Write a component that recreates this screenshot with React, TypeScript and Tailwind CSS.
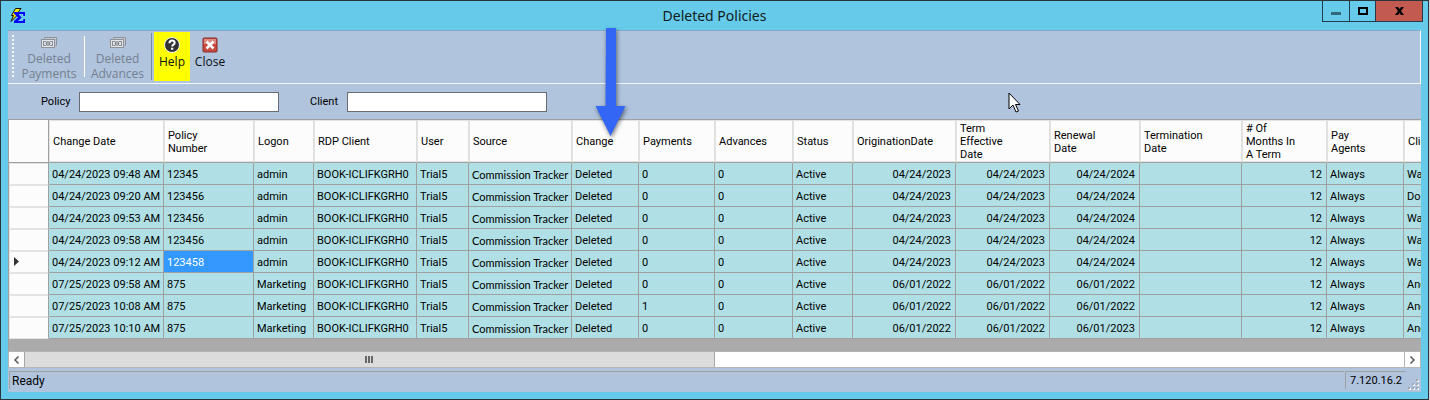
import React from "react";

interface Column {
  title: string;
  width: number;
  right?: boolean;
  font?: string;
}

interface PolicyRow {
  current?: boolean;
  cells: string[];
}

const columns: Column[] = [
  { title: "Change Date", width: 115 },
  { title: "Policy\nNumber", width: 90 },
  { title: "Logon", width: 60 },
  { title: "RDP Client", width: 103 },
  { title: "User", width: 52 },
  // narrower face so the source name fits its column
  { title: "Source", width: 103, font: "font-[Lato,sans-serif]" },
  { title: "Change", width: 67 },
  { title: "Payments", width: 76 },
  { title: "Advances", width: 78 },
  { title: "Status", width: 60 },
  { title: "OriginationDate", width: 103, right: true },
  { title: "Term\nEffective\nDate", width: 94, right: true },
  { title: "Renewal\nDate", width: 90, right: true },
  { title: "Termination\nDate", width: 102 },
  { title: "# Of\nMonths In\nA Term", width: 85, right: true },
  { title: "Pay\nAgents", width: 77 },
  { title: "Clie", width: 100 },
];

const makeRow = (
  changed: string,
  policy: string,
  logon: string,
  payments: string,
  start: string,
  renewal: string,
  client: string,
  current = false
): PolicyRow => ({
  current,
  cells: [
    changed, policy, logon, "BOOK-ICLIFKGRH0", "Trial5", "Commission Tracker", "Deleted",
    payments, "0", "Active", start, start, renewal, "", "12", "Always", client,
  ],
});

const rows: PolicyRow[] = [
  makeRow("04/24/2023 09:48 AM", "12345", "admin", "0", "04/24/2023", "04/24/2024", "Wa"),
  makeRow("04/24/2023 09:20 AM", "123456", "admin", "0", "04/24/2023", "04/24/2024", "Do"),
  makeRow("04/24/2023 09:53 AM", "123456", "admin", "0", "04/24/2023", "04/24/2024", "Wa"),
  makeRow("04/24/2023 09:58 AM", "123456", "admin", "0", "04/24/2023", "04/24/2024", "Wa"),
  makeRow("04/24/2023 09:12 AM", "123458", "admin", "0", "04/24/2023", "04/24/2024", "Wa", true),
  makeRow("07/25/2023 09:58 AM", "875", "Marketing", "0", "06/01/2022", "06/01/2022", "And"),
  makeRow("07/25/2023 10:08 AM", "875", "Marketing", "1", "06/01/2022", "06/01/2022", "And"),
  makeRow("07/25/2023 10:10 AM", "875", "Marketing", "0", "06/01/2022", "06/01/2023", "And"),
];

const AppIcon = () => (
  <svg className="w-4 h-4" viewBox="0 0 16 16" aria-hidden="true">
    <path d="M5.500 0.500H11L8 4.500h2L1 13.500 3.500 7.500H1.500z" fill="#ffe800" stroke="#111" />
    <path d="M4 4h11v4h-1.500L13 6H8.500L11.500 9.500 8 13h5l.5-2H15v4H4v-2l4-3.500L4 5.500z" fill="#0000ff" />
  </svg>
);

const MoneyIcon = () => (
  <svg className="w-4 h-3" viewBox="0 0 16 12" aria-hidden="true">
    <path d="M3 0h13v9h-2V2H3z" fill="#c4c8ce" />
    <path d="M3.500 1.500v-1h12v8h-1" fill="none" stroke="#8d9299" />
    <rect x="0.500" y="2.500" width="13" height="8" fill="#e1e4e8" stroke="#8d9299" />
    <path d="M2 4h3v1H3v3h2v1H2zM12 4H9v1h2v3H9v1h3z" fill="#8a8f97" />
    <circle cx="7" cy="6.500" r="2.200" fill="#747981" />
    <path d="M7 5v3" stroke="#e1e4e8" />
  </svg>
);

const HelpIcon = () => (
  <svg className="w-4 h-4" viewBox="0 0 16 16" aria-hidden="true">
    <circle cx="8" cy="8" r="7.500" fill="#303236" stroke="#f4f4f4" />
    <path d="M5.500 6.200c0-3.600 5.200-3.300 5.200-.4C10.700 7.700 8.200 7.600 8.200 9.600" fill="none" stroke="#fff" strokeWidth="2" />
    <rect x="7" y="10.700" width="2.300" height="2" fill="#fff" />
  </svg>
);

const CloseIcon = () => (
  <svg className="w-4 h-4" viewBox="0 0 16 16" aria-hidden="true">
    <rect x="1" y="1" width="14" height="14" rx="1" fill="#c9493c" stroke="#842c2c" />
    <path d="M2 2h12v5H2z" fill="#dd8b80" />
    <path d="M4.500 4.500l7 7M11.500 4.500l-7 7" stroke="#fff" strokeWidth="2.500" />
  </svg>
);

const TitleBar = () => (
  <header className="relative flex h-[29px] shrink-0 items-start">
    <div className="flex h-full flex-1 items-center pl-[9px]">
      <AppIcon />
    </div>
    <h1 className="pointer-events-none absolute inset-x-0 top-0 text-center font-['Noto_Sans',sans-serif] text-[14px] leading-[29px] text-[#101c22]">
      Deleted Policies
    </h1>
    <div className="relative mr-[5px] flex h-[21px] divide-x divide-[#253a44] border border-t-0 border-[#253a44]">
      <button aria-label="Minimize" className="flex w-[27px] items-center justify-center pt-[4px]">
        <span className="h-[3px] w-[10px] bg-[#336a7e]" />
      </button>
      <button aria-label="Maximize" className="flex w-[26px] items-center justify-center">
        <span className="h-[8px] w-[10px] border-2 border-black" />
      </button>
      <button aria-label="Close window" className="flex w-[46px] items-center justify-center bg-[#c35a4f]">
        <svg className="h-2 w-[9px]" viewBox="0 0 9 8">
          <path d="M0 0h3l1.500 2L6 0h3L6 4l3 4H6L4.500 6 3 8H0l3-4z" fill="#000" />
        </svg>
      </button>
    </div>
  </header>
);

const Toolbar = () => (
  <div className="flex h-[54px] shrink-0 border-t border-b border-t-[#84a9c8] border-b-[#f3f6fa] border-r border-r-white pb-px font-['Open_Sans',sans-serif] text-[12px] leading-[15px] text-[#0b0f14]">
    <div className="my-1 ml-1 w-[2px] bg-[repeating-linear-gradient(to_bottom,#f4f7fb_0_2px,transparent_2px_4px)]" />
    <button disabled className="flex w-[70px] flex-col items-center pt-[6px] text-[#75808f]">
      <MoneyIcon />
      <span className="mt-[2px]">Deleted<br />Payments</span>
    </button>
    <div className="my-[5px] w-px bg-white" />
    <button disabled className="flex w-[65px] flex-col items-center pt-[6px] text-[#75808f]">
      <MoneyIcon />
      <span className="mt-[2px]">Deleted<br />Advances</span>
    </button>
    <div className="my-[2px] ml-px mr-[2px] w-px bg-[#7688a5]" />
    <button className="my-px flex w-[36px] flex-col items-center bg-[#ffff00] pt-[5px]">
      <HelpIcon />
      <span className="mt-px">Help</span>
    </button>
    <button className="flex w-[40px] flex-col items-center pt-[6px]">
      <CloseIcon />
      <span className="mt-px">Close</span>
    </button>
  </div>
);

const Filters = () => (
  <div className="flex h-[35px] shrink-0 items-center pl-[33px] pt-px text-[11px]">
    <label htmlFor="policy" className="w-[38px] pt-px">Policy</label>
    <input id="policy" type="text" className="h-5 w-[200px] border border-[#696d73] bg-white px-1" />
    <label htmlFor="client" className="ml-[31px] w-[37px] pt-px">Client</label>
    <input id="client" type="text" className="h-5 w-[200px] border border-[#696d73] bg-white px-1" />
  </div>
);

const PolicyGrid = () => (
  <div className="h-[232px] overflow-hidden border-l border-t border-[#a0a0a0] bg-[#ababab]">
    <table className="w-[1495px] table-fixed border-separate border-spacing-0 text-[11px] leading-[13px]">
      <colgroup>
        <col style={{ width: 40 }} />
        {columns.map((col, i) => (
          <col key={i} style={{ width: col.width }} />
        ))}
      </colgroup>
      <thead>
        <tr className="h-[43px]">
          <th aria-label="Row" className="border-b border-r border-[#a0a0a0] bg-[#fcfcfc] p-0" />
          {columns.map((col, i) => (
            <th
              key={i}
              className="whitespace-pre border-b border-r border-b-[#a0a0a0] border-r-[#dedede] bg-[#fcfcfc] p-0 pl-[4px] pt-px text-left align-middle font-normal shadow-[inset_1px_1px_0_#e3e3e3,inset_0_-1px_0_#e3e3e3]"
            >
              {col.title}
            </th>
          ))}
        </tr>
      </thead>
      <tbody>
        {rows.map((row, r) => (
          <tr key={r} className="h-[22px]">
            <th className="border-b border-r border-b-[#e3e3e3] border-r-[#a0a0a0] bg-[#fcfcfc] p-0 shadow-[inset_1px_1px_0_#e3e3e3]">
              {row.current && (
                <svg className="ml-[5px] h-[9px] w-[5px]" viewBox="0 0 5 9">
                  <path d="M0 0l5 4.500L0 9z" fill="#333" />
                </svg>
              )}
            </th>
            {row.cells.map((cell, c) => (
              <td
                key={c}
                className={`overflow-hidden whitespace-nowrap border-b border-r border-[#a0a0a0] p-0 pt-px ${
                  columns[c].right ? "pr-[4px] text-right" : "pl-[3px] text-left"
                } ${row.current && c === 1 ? "bg-[#3399ff] text-white" : "bg-[#b0e0e6]"} ${columns[c].font ?? ""}`}
              >
                {cell}
              </td>
            ))}
          </tr>
        ))}
      </tbody>
    </table>
  </div>
);

const ScrollBar = () => (
  <div className="flex h-[17px] shrink-0 border border-[#b5b5b5] bg-white">
    <button aria-label="Scroll left" className="flex w-4 items-center justify-center border-r border-[#a6a6a6]">
      <svg className="h-2 w-[5px]" viewBox="0 0 5 8">
        <path d="M4.500 0.500L1 4l3.500 3.500" fill="none" stroke="#555" strokeWidth="1.500" />
      </svg>
    </button>
    <div className="flex flex-1">
      <div className="flex w-[50%] items-center justify-center gap-px border-r border-[#a6a6a6] bg-[#dcdcdc]">
        <span className="h-[7px] w-[2px] bg-[#666]" />
        <span className="h-[7px] w-[2px] bg-[#666]" />
        <span className="h-[7px] w-[2px] bg-[#666]" />
      </div>
    </div>
    <button aria-label="Scroll right" className="flex w-4 items-center justify-center border-l border-[#b5b5b5]">
      <svg className="h-2 w-[5px]" viewBox="0 0 5 8">
        <path d="M0.500 0.500L4 4 0.500 7.500" fill="none" stroke="#555" strokeWidth="1.500" />
      </svg>
    </button>
  </div>
);

const StatusBar = () => (
  <footer className="flex h-[24px] shrink-0 pl-px pt-[3px] text-[12px] leading-[18px]">
    <div className="mb-[3px] flex-1 border-l border-t border-[#a0a0a0] pl-[2px]">Ready</div>
    <div className="mb-[3px] ml-px w-[61px] border-l border-t border-[#a0a0a0] pl-1 text-[11px]">7.120.16.2</div>
    <svg className="ml-[2px] mt-[8px] h-[12px] w-[13px]" viewBox="0 0 13 12">
      <path d="M9 1h2v2H9zM5 5h2v2H5zM9 5h2v2H9zM1 9h2v2H1zM5 9h2v2H5zM9 9h2v2H9z" fill="#f4f4f4" />
      <path d="M8 0h2v2H8zM4 4h2v2H4zM8 4h2v2H8zM0 8h2v2H0zM4 8h2v2H4zM8 8h2v2H8z" fill="#a4a9b0" />
    </svg>
  </footer>
);

export default function App() {
  return (
    <div className="bg-[#d5d5d5] pr-px">
      <div className="relative flex flex-col border border-[#2b333b] bg-[#66cbea] font-[Roboto,Arial,sans-serif] text-black">
        <TitleBar />
        <main className="mx-[7px] mb-[7px] flex flex-col bg-[#b0c4de]">
          <Toolbar />
          <Filters />
          <PolicyGrid />
          <ScrollBar />
          <StatusBar />
        </main>

        {/* annotation arrow over the Change column */}
        <svg
          className="pointer-events-none absolute left-[590px] top-[26px] h-[116px] w-[40px] drop-shadow-[1px_2px_2px_rgba(0,0,0,0.5)]"
          viewBox="0 0 40 116"
        >
          <path d="M15 1h10v78h9.500L19.500 109 4.500 79H14.500z" fill="#3366f5" />
        </svg>

        {/* mouse pointer */}
        <svg className="pointer-events-none absolute left-[1007px] top-[91px] h-[21px] w-[13px]" viewBox="0 0 13 21">
          <path d="M1 1v16l4-4 3 7 2.500-1-3-6.500H12z" fill="#fff" stroke="#000" />
        </svg>
      </div>
    </div>
  );
}
